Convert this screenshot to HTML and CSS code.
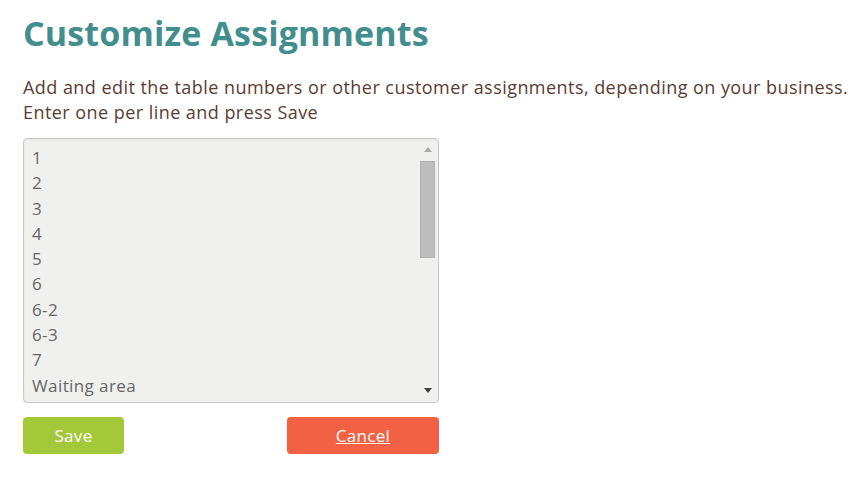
FILE: index.html
```html
<!DOCTYPE html>
<html>
<head>
<meta charset="utf-8">
<link rel="stylesheet" href="styles.css">
</head>
<body>
<main class="page">
  <h1 class="title">Customize Assignments</h1>
  <p class="intro">Add and edit the table numbers or other customer assignments, depending on your business.<br>Enter one per line and press Save</p>
  <div class="editor">
    <textarea class="list" spellcheck="false">1
2
3
4
5
6
6-2
6-3
7
Waiting area
Bar
Patio 1
Patio 2
Patio 3
Booth 1
Booth 2
Booth 3
Counter
Takeout
Delivery
Lounge
Terrace
VIP</textarea>
    <div class="scrollbar" aria-hidden="true">
      <span class="arrow up"></span>
      <span class="thumb"></span>
      <span class="arrow down"></span>
    </div>
  </div>
  <div class="actions">
    <button class="btn save">Save</button>
    <button class="btn cancel">Cancel</button>
  </div>
</main>
</body>
</html>
```
FILE: styles.css
```css
html, body {
  margin: 0;
  padding: 0;
  background: #ffffff;
}
.page {
  padding: 10px 0 0 23px;
  font-family: "Open Sans", "Liberation Sans", sans-serif;
}
.title {
  margin: 0;
  font-size: 34px;
  line-height: 46px;
  font-weight: 700;
  color: #428e8d;
  letter-spacing: 0.15px;
}
.intro {
  margin: 19px 0 0 0;
  font-size: 18px;
  line-height: 25px;
  color: #5a3c33;
  letter-spacing: 0.45px;
  white-space: nowrap;
}
.editor {
  position: relative;
  width: 416px;
  height: 265px;
  margin-top: 13px;
}
.list {
  box-sizing: border-box;
  width: 416px;
  height: 265px;
  margin: 0;
  padding: 6px 8px;
  border: 1px solid #c9c9c9;
  border-radius: 4px;
  background: #f0f0ef;
  box-shadow: inset 0 1px 2px rgba(0,0,0,0.06);
  font-family: "Open Sans", "Liberation Sans", sans-serif;
  font-size: 17px;
  line-height: 25.3px;
  letter-spacing: 0.4px;
  color: #666666;
  resize: none;
  overflow: hidden;
  outline: none;
}
.scrollbar {
  position: absolute;
  top: 1px;
  right: 3px;
  bottom: 1px;
  width: 17px;
  display: flex;
  flex-direction: column;
  align-items: center;
}
.arrow {
  width: 0;
  height: 0;
  border-left: 4px solid transparent;
  border-right: 4px solid transparent;
}
.arrow.up {
  margin-top: 8px;
  border-bottom: 5px solid #a9a9a9;
}
.thumb {
  margin-top: 9px;
  width: 15px;
  height: 97px;
  background: #bdbdbd;
  border: 1px solid #b2b2b2;
  box-sizing: border-box;
}
.arrow.down {
  margin-top: auto;
  margin-bottom: 9px;
  border-top: 5px solid #3f3f3f;
}
.actions {
  display: flex;
  justify-content: space-between;
  width: 416px;
  margin-top: 14px;
}
.btn {
  height: 37px;
  border: none;
  border-radius: 4px;
  color: #ffffff;
  font-family: "Open Sans", "Liberation Sans", sans-serif;
  font-size: 17px;
  letter-spacing: 0.3px;
  padding: 0;
}
.save {
  width: 101px;
  background: #a3c93b;
}
.cancel {
  width: 152px;
  background: #f26143;
  text-decoration: underline;
}
```
